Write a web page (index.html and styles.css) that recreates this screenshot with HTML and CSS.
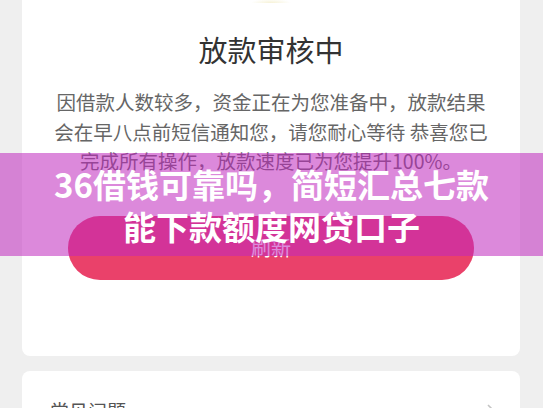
FILE: index.html
```html
<!DOCTYPE html>
<html lang="zh-CN">
<head>
  <meta charset="UTF-8" />
  <title>放款审核中</title>
  <link rel="stylesheet" href="styles.css">
</head>
<body>

  <div class="page">
    <div class="card status-card">
      <div class="status-icon"></div>
      <h1 class="status-title">放款审核中</h1>
      <p class="status-text">因借款人数较多，资金正在为您准备中，放款结果会在早八点前短信通知您，请您耐心等待 恭喜您已完成所有操作，放款速度已为您提升100%。</p>
      <button class="refresh-btn">刷新</button>
    </div>

    <div class="card faq-card">
      <span class="faq-title">常见问题</span>
      <svg class="chevron" width="10" height="16" viewBox="0 0 10 16">
        <polyline points="2,2 8,8 2,14" fill="none" stroke="#c4c4c4" stroke-width="1.6" />
      </svg>
    </div>
  </div>

  <div class="banner">
    <div class="banner-line">36借钱可靠吗，简短汇总七款</div>
    <div class="banner-line">能下款额度网贷口子</div>
  </div>

</body>
</html>
```

FILE: styles.css
```css
body {
  margin: 0;
  background-color: #efefef;
  font-family: "Noto Sans CJK SC", "Noto Sans", sans-serif;
  overflow: hidden;
}

.page {
  padding: 0 23px 0 22px;
  margin-top: -70px;
}

.card {
  background-color: #fff;
  border-radius: 8px;
}

.status-card {
  display: flex;
  flex-direction: column;
  align-items: center;
  padding: 0 29px 76px;
}

/* icon sits above the visible area, only its bottom edge peeks in */
.status-icon {
  width: 40px;
  height: 73px;
  background: radial-gradient(ellipse 20px 4px at 50% 100%, #f6f2d6, #fff);
}

.status-title {
  margin: 26px 0 0;
  font-size: 29px;
  line-height: 40px;
  font-weight: 400;
  color: #333;
}

.status-text {
  margin: 18px 0 0;
  width: 440px;
  font-size: 19.5px;
  line-height: 29.5px;
  color: #666;
  text-align: center;
}

.refresh-btn {
  margin-top: 40px;
  width: 406px;
  height: 64px;
  border: none;
  border-radius: 32px;
  background-color: #ea416a;
  color: #fff;
  font-family: inherit;
  font-size: 20px;
}

.faq-card {
  margin-top: 15px;
  height: 80px;
  display: flex;
  justify-content: space-between;
  align-items: flex-start;
  padding: 26px 24px 0 28px;
}

.faq-title {
  font-size: 19px;
  color: #555;
}

.chevron {
  margin-top: 6px;
}

.banner {
  position: absolute;
  left: 0;
  top: 153px;
  width: 100%;
  height: 103px;
  background-color: rgba(192, 40, 190, 0.55);
  display: flex;
  flex-direction: column;
  justify-content: center;
  align-items: center;
}

.banner-line {
  color: #fff;
  font-size: 33px;
  line-height: 42px;
  font-weight: 700;
}
```
